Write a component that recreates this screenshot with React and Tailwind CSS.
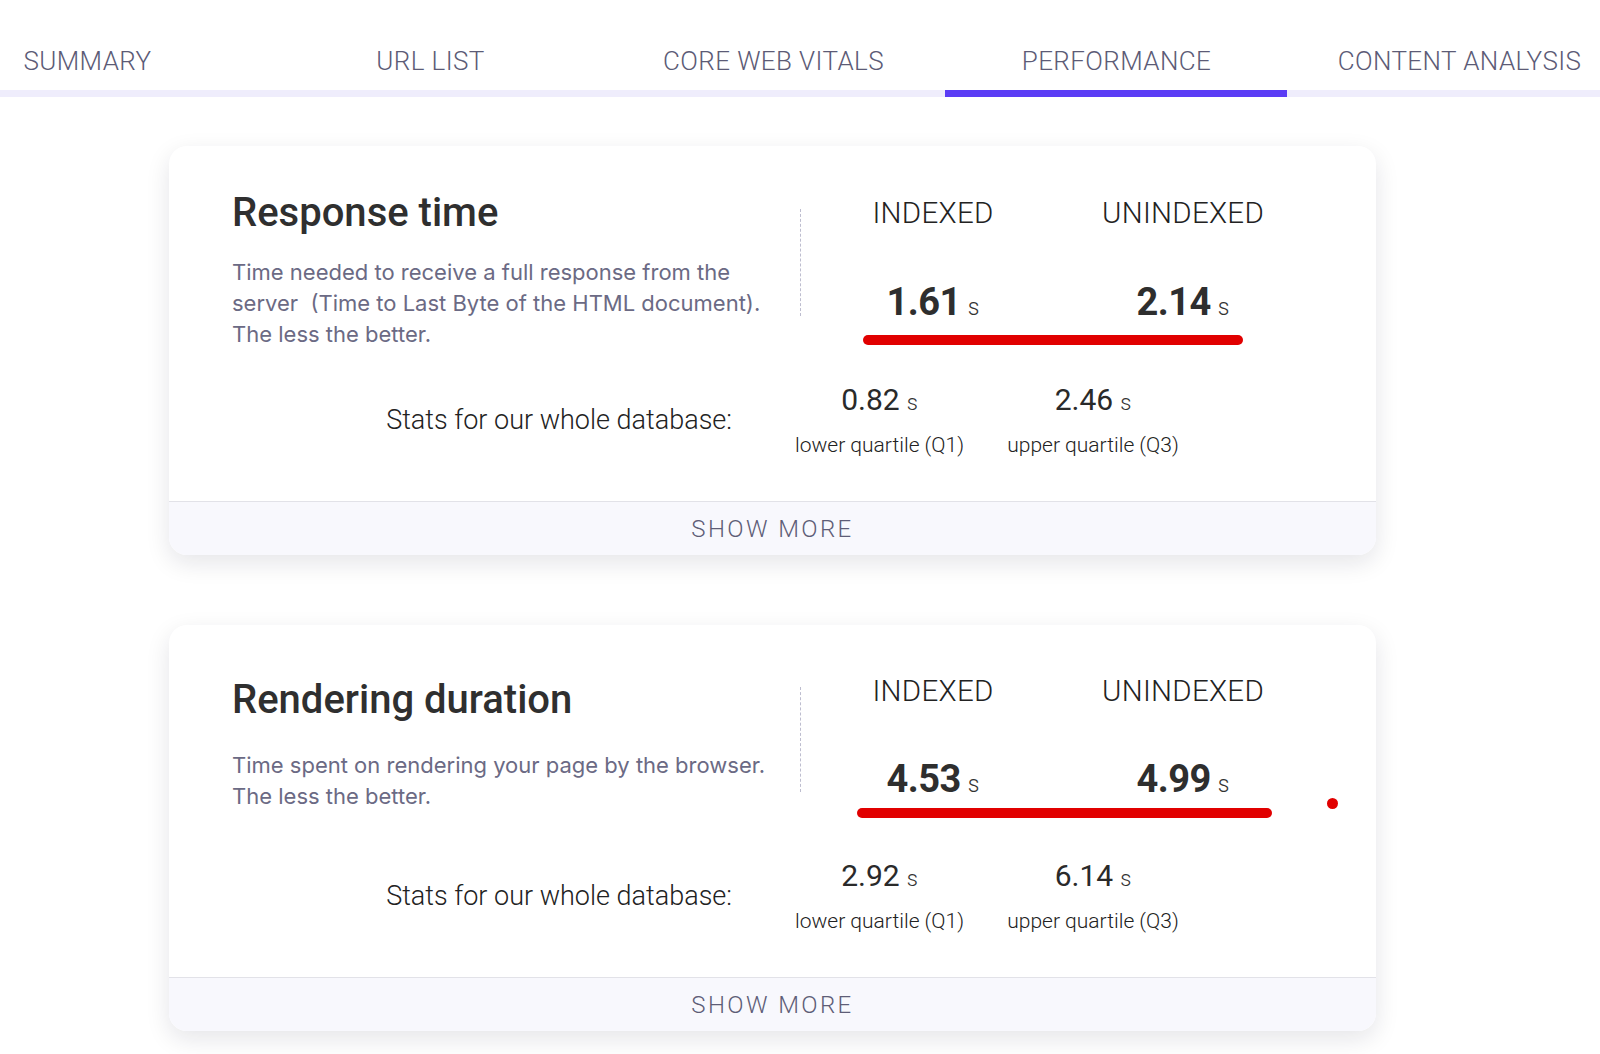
import React from "react";

const tabs = ["SUMMARY", "URL LIST", "CORE WEB VITALS", "PERFORMANCE", "CONTENT ANALYSIS"];

const cards = [
  {
    title: "Response time",
    desc: ["Time needed to receive a full response from the", "server\u00a0 (Time to Last Byte of the HTML document).", "The less the better."],
    indexed: "1.61",
    unindexed: "2.14",
    q1: "0.82",
    q3: "2.46",
    titleMt: "mt-[43px]",
    descMt: "mt-[21px]",
    dashMt: "mt-[63px] h-[107px]",
    headMt: "mt-[50px]",
    valMt: "mt-[49px]",
    line: "mt-[5px] ml-[55px] w-[380px]",
    statsMt: "mt-[31px]",
    pb: "pb-[43px]",
    dot: false,
  },
  {
    title: "Rendering duration",
    desc: ["Time spent on rendering your page by the browser.", "The less the better."],
    indexed: "4.53",
    unindexed: "4.99",
    q1: "2.92",
    q3: "6.14",
    titleMt: "mt-[51px]",
    descMt: "mt-[27px]",
    dashMt: "mt-[62px] h-[105px]",
    headMt: "mt-[49px]",
    valMt: "mt-[48px]",
    line: "mt-[1px] ml-[49px] w-[415px]",
    statsMt: "mt-[39px]",
    pb: "pb-[43px]",
    dot: true,
  },
];

const Value = ({ n }) => (
  <div className="flex items-baseline justify-center gap-[7px] leading-[45px]">
    <span className="text-[38px] font-bold text-[#2e2e2e] tracking-[-0.015em]">{n}</span>
    <span className="text-[23px] font-light text-[#333]">s</span>
  </div>
);

const Quartile = ({ n, label, w }) => (
  <div className={"flex flex-col items-center " + w}>
    <div className="flex items-baseline gap-[7px] leading-[37px]">
      <span className="text-[30px] text-[#2a2a2a]">{n}</span>
      <span className="text-[22px] font-light text-[#333]">s</span>
    </div>
    <div className="mt-[12px] text-[21px] leading-[25px] font-light text-[#222] whitespace-nowrap">{label}</div>
  </div>
);

const Card = ({ c, mt }) => (
  <div className={"relative ml-[169px] w-[1207px] rounded-[18px] bg-white shadow-[0_8px_24px_rgba(20,20,50,0.11)] " + mt}>
    <div className={"pl-[63px] " + c.pb}>
      <div className="flex items-start">
        <div className="w-[568px]">
          <h2 className={"text-[40px] leading-[47px] font-medium text-[#2f2f2f] " + c.titleMt}>{c.title}</h2>
          <p className={"text-[22px] leading-[31px] text-[#6b6a84] " + c.descMt} style={{ fontFamily: "Inter, sans-serif" }}>
            {c.desc.map((l, i) => (
              <span key={i} className="block whitespace-nowrap">{l}</span>
            ))}
          </p>
        </div>
        <div className={"border-l border-dashed border-[#bdbdcf] " + c.dashMt} />
        <div className="ml-[7px]">
          <div className={"flex text-[29.5px] leading-[35px] font-light text-[#222] tracking-[0.01em] " + c.headMt}>
            <div className="w-[250px] text-center">INDEXED</div>
            <div className="w-[250px] text-center">UNINDEXED</div>
          </div>
          <div className={"flex " + c.valMt}>
            <div className="w-[250px]"><Value n={c.indexed} /></div>
            <div className="w-[250px]"><Value n={c.unindexed} /></div>
          </div>
          <div className={"h-[10px] rounded-full bg-[#e10000] " + c.line} />
        </div>
      </div>
      <div className={"flex items-center " + c.statsMt}>
        <div className="w-[500px] text-right text-[27px] leading-[32px] font-light text-[#222]">Stats for our whole database:</div>
        <div className="ml-[63px] flex gap-[40px]">
          <Quartile n={c.q1} label="lower quartile (Q1)" w="w-[169px]" />
          <Quartile n={c.q3} label="upper quartile (Q3)" w="w-[178px]" />
        </div>
      </div>
    </div>
    <div className="h-[54px] border-t border-[#e2e2e8] bg-[#f8f8fd] rounded-b-[18px] flex items-center justify-center text-[24px] font-light tracking-[0.1em] text-[#5e5d77]">
      SHOW MORE
    </div>
    {c.dot && <div className="absolute left-[1158px] top-[173px] w-[11px] h-[11px] rounded-full bg-[#e10000]" />}
  </div>
);

export default function App() {
  return (
    <div className="min-h-screen w-[1600px] bg-white pb-10 overflow-hidden" style={{ fontFamily: "Roboto, 'Open Sans', sans-serif" }}>
      <div>
        <div className="flex -ml-[84px]">
          {tabs.map((t) => (
            <div key={t} className="shrink-0 w-[343px] h-[90px] flex items-end justify-center pb-[14px] text-[26px] leading-[30px] font-light tracking-[0.015em] text-[#5c5b76]">
              {t}
            </div>
          ))}
        </div>
        <div className="h-[7px] bg-[#efedfc] flex">
          <div className="ml-[945px] w-[342px] bg-[#5b3cf5]" />
        </div>
      </div>
      <Card c={cards[0]} mt="mt-[49px]" />
      <Card c={cards[1]} mt="mt-[70px]" />
    </div>
  );
}
